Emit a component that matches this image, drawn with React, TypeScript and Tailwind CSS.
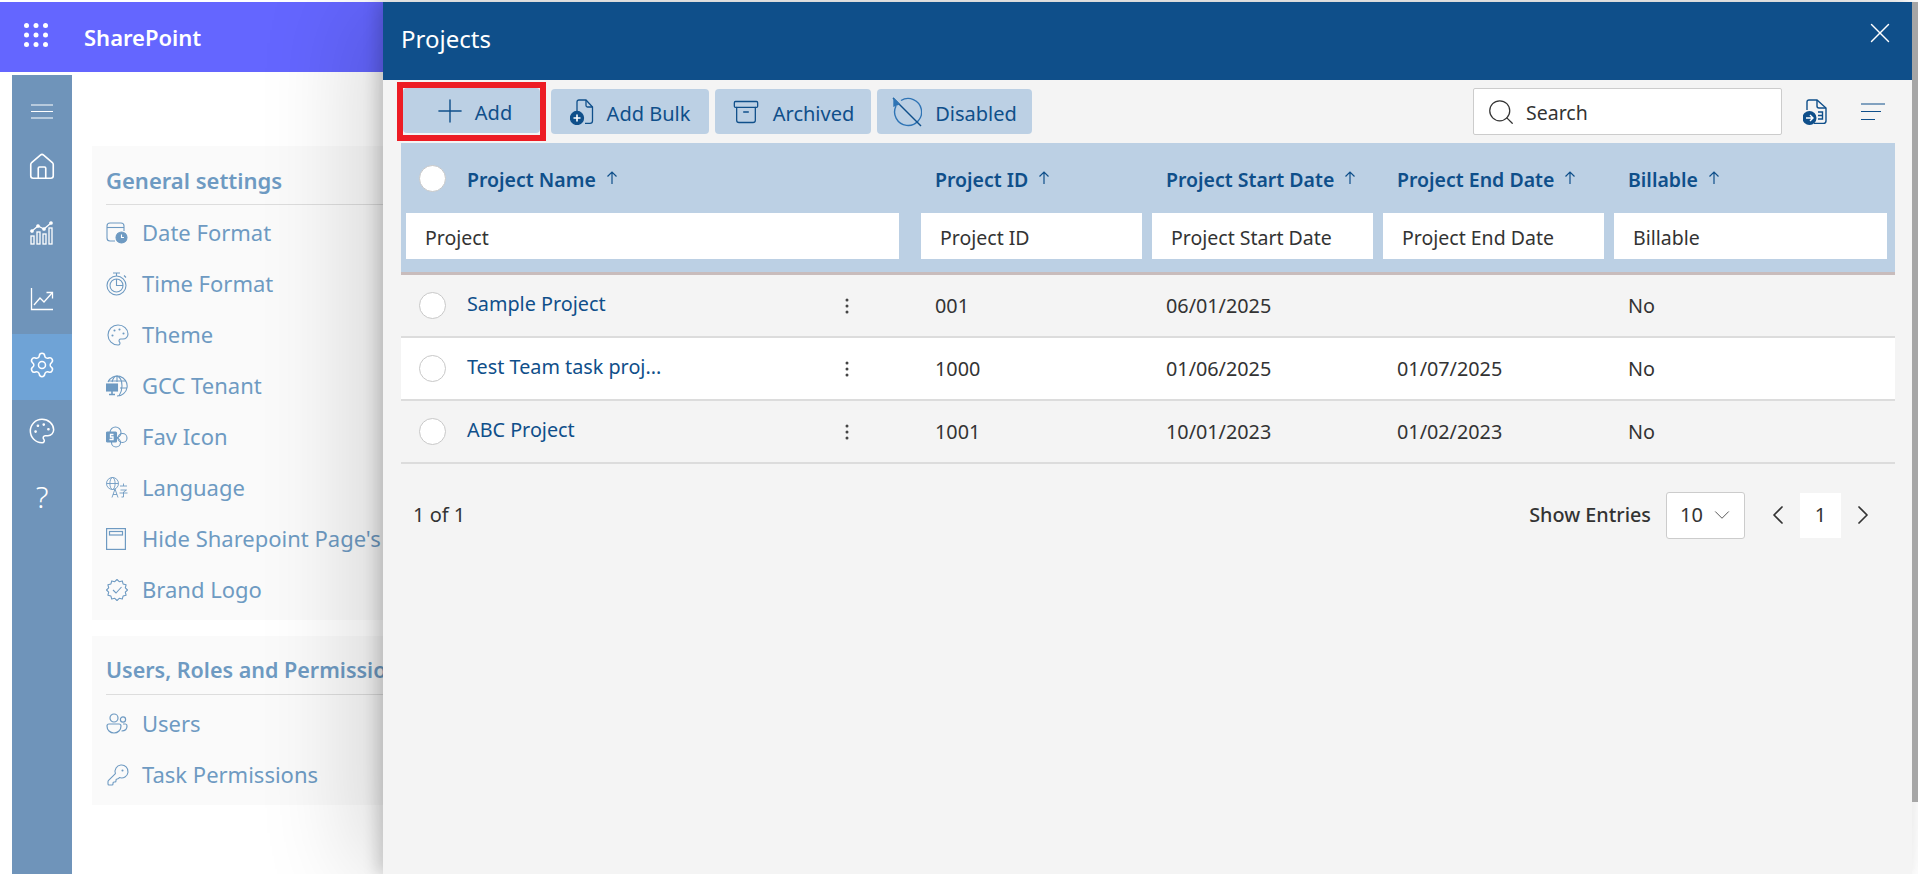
import { useState } from 'react';
import {
	Archive,
	ChevronDown,
	ChevronLeft,
	ChevronRight,
	House,
	KeyRound,
	Palette,
	Plus,
	Search,
	Settings,
	X,
} from 'lucide-react';

const COLS = 'grid grid-cols-[520px_231px_231px_231px_281px]';

type Row = {
	name: string;
	id: string;
	start: string;
	end: string;
	billable: string;
};

const rows: Row[] = [
	{ name: 'Sample Project', id: '001', start: '06/01/2025', end: '', billable: 'No' },
	{ name: 'Test Team task proj...', id: '1000', start: '01/06/2025', end: '01/07/2025', billable: 'No' },
	{ name: 'ABC Project', id: '1001', start: '10/01/2023', end: '01/02/2023', billable: 'No' },
];

function Waffle() {
	return (
		<svg viewBox="0 0 24 24" className="w-6 h-6 fill-white -mt-1">
			{[2.5, 12, 21.5].map((y) =>
				[2.5, 12, 21.5].map((x) => <circle key={x + '-' + y} cx={x} cy={y} r="2.5" />),
			)}
		</svg>
	);
}

function BarsIcon() {
	return (
		<svg viewBox="0 0 24 24" className="w-6 h-6 fill-none stroke-white" strokeWidth="1.3">
			<rect x="1" y="15" width="3" height="8" />
			<rect x="7" y="11" width="3" height="12" />
			<rect x="13" y="13" width="3" height="10" />
			<rect x="19" y="7" width="3" height="16" />
			<path d="M2 10 L8 5 L14 8 L21 2" />
			<circle cx="2" cy="10" r="1.2" className="fill-white" />
			<circle cx="8" cy="5" r="1.2" className="fill-white" />
			<circle cx="14" cy="8" r="1.2" className="fill-white" />
			<circle cx="21" cy="2" r="1.2" className="fill-white" />
		</svg>
	);
}

function TrendIcon() {
	return (
		<svg viewBox="0 0 24 24" className="w-6 h-6 fill-none stroke-white" strokeWidth="1.3">
			<path d="M1.5 1 V22.5 H23" />
			<path d="M4 18 L10 11 L14 15 L22 6" />
			<path d="M16.5 5.5 H22.5 V11.5" />
		</svg>
	);
}

function CalendarIcon() {
	return (
		<svg viewBox="0 0 22 22" className="w-[22px] h-[22px] fill-none stroke-[#6e9ac2]" strokeWidth="1.1">
			<path d="M9 19 H4 C2 19 1 18 1 16 V4 C1 2 2 1 4 1 H15 C17 1 18 2 18 4 V9" />
			<path d="M1 5.5 H18" />
			<circle cx="15.5" cy="15.5" r="5.5" className="fill-[#6e9ac2]" />
			<path d="M15.5 12.5 V15.5 H18" className="stroke-white" />
		</svg>
	);
}

function TimerIcon() {
	return (
		<svg viewBox="0 0 22 24" className="w-[22px] h-[24px] fill-none stroke-[#6e9ac2]" strokeWidth="1.1">
			<path d="M7 1 H14 M10.5 1 V4 M18 3.5 L20 5.5" />
			<circle cx="10.5" cy="13.5" r="9.5" />
			<circle cx="10.5" cy="13.5" r="6.5" />
			<path d="M10.5 7 V13.5 H17" />
		</svg>
	);
}

function GlobeIcon() {
	return (
		<svg viewBox="0 0 22 22" className="w-[22px] h-[22px] fill-none stroke-[#6e9ac2]" strokeWidth="1.1">
			<path d="M2 7 A10 10 0 1 1 11 21" />
			<path d="M6 7 C7 3 9 1 11 1 C14 2 16 6 16 11 C16 15 15 18 13 21" />
			<path d="M2 6 H20 M14 13 H21" />
			<path d="M11 1 V7" />
			<rect x="0.5" y="9" width="11" height="7" className="fill-[#6e9ac2]" />
			<path d="M6 16 V19 M3 19.5 H9" strokeWidth="1.6" />
		</svg>
	);
}

function FavIcon() {
	return (
		<svg viewBox="0 0 22 22" className="w-[22px] h-[22px] fill-none stroke-[#6e9ac2]" strokeWidth="1.1">
			<circle cx="9.5" cy="6.5" r="5.5" />
			<circle cx="16.5" cy="12" r="4.5" />
			<circle cx="10" cy="16.5" r="4.5" />
			<rect x="0.5" y="6" width="10" height="10" rx="1" className="fill-[#6e9ac2]" />
			<path d="M7.5 8.5 H4.5 V11 H7 V13.5 H3.5" className="stroke-white" strokeWidth="1.3" />
		</svg>
	);
}

function LanguageIcon() {
	return (
		<svg viewBox="0 0 22 22" className="w-[22px] h-[22px] fill-none stroke-[#6e9ac2]" strokeWidth="0.9">
			<circle cx="6.5" cy="6.5" r="6" />
			<ellipse cx="6.5" cy="6.5" rx="2.6" ry="6" />
			<path d="M0.5 6.5 H12.5" />
			<path d="M6 20.5 L9 12 L12 20.5 M7 17.5 H11" />
			<path d="M14 9 H21 M17.5 6.5 V9 M14.5 13 H20.5 L17.5 15 V20 L15.5 20 M13.5 16 H21.5" />
		</svg>
	);
}

function PageIcon() {
	return (
		<svg viewBox="0 0 20 22" className="w-[20px] h-[22px] fill-none stroke-[#6e9ac2]" strokeWidth="1.2">
			<rect x="0.6" y="0.6" width="18.8" height="20.8" />
			<rect x="3.5" y="3.5" width="13" height="3.5" />
		</svg>
	);
}

// scalloped seal with a tick, as on the Brand Logo row
function SealIcon() {
	const pts: string[] = [];
	for (let i = 0; i < 24; i++) {
		const r = i % 2 === 0 ? 10.5 : 8.6;
		const a = (i * Math.PI) / 12;
		pts.push(`${(11 + r * Math.cos(a)).toFixed(2)},${(11 + r * Math.sin(a)).toFixed(2)}`);
	}
	return (
		<svg viewBox="0 0 22 22" className="w-[22px] h-[22px] fill-none stroke-[#6e9ac2]" strokeWidth="1.1">
			<polygon points={pts.join(' ')} strokeLinejoin="round" />
			<path d="M7 11 L10 14 L15.5 8" />
		</svg>
	);
}

function UsersIcon() {
	return (
		<svg viewBox="0 0 22 22" className="w-[22px] h-[22px] fill-none stroke-[#6e9ac2]" strokeWidth="1.2">
			<circle cx="8" cy="5" r="4" />
			<circle cx="17" cy="6.5" r="2.6" />
			<path d="M3 11 H13 C14.5 11 15 12 15 13 C15 17 12 20 8 20 C4 20 1 17 1 13 C1 12 1.5 11 3 11 Z" />
			<path d="M17 11 H19.5 C20.5 11 21 12 21 13 C21 16 19 18 15.5 18" />
		</svg>
	);
}

function AddBulkIcon() {
	return (
		<svg viewBox="0 0 24 26" className="w-6 h-[26px] fill-none stroke-[#0f4f8a]" strokeWidth="1.3">
			<path d="M7 12 V3 C7 1.8 7.8 1 9 1 H16 L22.5 8 V22 C22.5 23.5 21.5 24.3 20 24.3 H15" />
			<path d="M16 1 V6.5 C16 7.5 16.7 8 17.5 8 H22.5" />
			<circle cx="7" cy="19" r="6.5" className="fill-[#0f4f8a]" />
			<path d="M7 15.5 V22.5 M3.5 19 H10.5" className="stroke-white" strokeWidth="1.6" />
		</svg>
	);
}

function DisabledIcon() {
	return (
		<svg viewBox="0 0 30 30" className="w-[30px] h-[30px] fill-none stroke-[#2f74b5]" strokeWidth="1.4">
			<path d="M4 9 A13.5 13.5 0 1 0 9 3.5" />
			<path d="M1 1 L29 29" className="stroke-[#0f4f8a]" />
			<path d="M2 2 L2 9 L7 7 Z" className="fill-[#2f74b5]" />
		</svg>
	);
}

function ExportIcon() {
	return (
		<svg viewBox="0 0 24 26" className="w-6 h-[26px] fill-none stroke-[#0f4f8a]" strokeWidth="1.4">
			<path d="M4 11 V3 C4 1.8 4.8 1 6 1 H14 L23 9 V22 C23 23.5 22 24.4 20.5 24.4 H11" />
			<path d="M14 1 V7 C14 8 14.7 9 16 9 H23" />
			<path d="M15 13 H19.5 V20 H15 M15 16.5 H19.5" />
			<circle cx="6.5" cy="19" r="6.3" className="fill-[#0f4f8a]" />
			<path d="M3 19 H10 M7 16 L10 19 L7 22" className="stroke-white" strokeWidth="1.4" />
		</svg>
	);
}

function SortUp() {
	return (
		<svg viewBox="0 0 12 14" className="w-3 h-3.5 fill-none stroke-[#0f4f8a] ml-2.5" strokeWidth="1.2">
			<path d="M6 13 V1 M1.5 5.5 L6 1 L10.5 5.5" />
		</svg>
	);
}

function Circle() {
	return <span className="block w-[27px] h-[27px] rounded-full border border-[#c8c8c8] bg-white" />;
}

function RailIcon({ active, children }: { active?: boolean; children: React.ReactNode }) {
	return (
		<div
			className={`h-[66px] pb-[4px] flex items-center justify-center text-white ${
				active ? 'bg-[#6fa3d6]' : ''
			}`}>
			{children}
		</div>
	);
}

function Item({ icon, label }: { icon: React.ReactNode; label: string }) {
	return (
		<div className="h-[51px] flex items-center whitespace-nowrap">
			<span className="w-9 flex-none flex items-center">{icon}</span>
			<span className="text-[22px] text-[#6e9ac2]">{label}</span>
		</div>
	);
}

function ToolButton({
	icon,
	label,
	width,
}: {
	icon: React.ReactNode;
	label: string;
	width: string;
}) {
	return (
		<button
			className={`h-[45px] bg-[#bcd0e4] rounded-sm flex items-center justify-center gap-[13px] text-[#0f4f8a] text-[20px] ${width}`}>
			{icon}
			<span className="pt-[4px]">{label}</span>
		</button>
	);
}

function FilterInput({ label, cls }: { label: string; cls: string }) {
	return (
		<div className={cls}>
			<div className="h-[46px] bg-white flex items-center pl-[19px] pt-[3px] text-[19.5px] text-[#333]">
				{label}
			</div>
		</div>
	);
}

export default function App() {
	const [page] = useState(1);
	return (
		<div className="relative w-full h-[874px] overflow-hidden bg-white font-['Noto_Sans','Open_Sans',sans-serif]">
			<div className="h-[2px] bg-white" />
			<header className="h-[70px] bg-[#6466ff] flex items-center pl-6 gap-[32px]">
				<Waffle />
				<span className="ml-1 text-white font-semibold text-[22px]">SharePoint</span>
			</header>
			<div className="flex pt-[3px]">
				<nav className="ml-3 w-[60px] h-[799px] bg-[#6f94ba] flex-none">
					<div className="h-[61px] pt-[11px] flex items-center justify-center">
						<svg viewBox="0 0 22 15" className="w-[22px] h-[15px] stroke-white" strokeWidth="1.2">
							<path d="M0 1 H22 M0 7.5 H22 M0 14 H22" />
						</svg>
					</div>
					<RailIcon>
						<House size={30} strokeWidth={1.3} />
					</RailIcon>
					<RailIcon>
						<BarsIcon />
					</RailIcon>
					<RailIcon>
						<TrendIcon />
					</RailIcon>
					<RailIcon active>
						<Settings size={28} strokeWidth={1.3} />
					</RailIcon>
					<RailIcon>
						<Palette size={28} strokeWidth={1.3} />
					</RailIcon>
					<RailIcon>
						<span className="text-[30px] font-light leading-none">?</span>
					</RailIcon>
				</nav>
				<main className="ml-5 w-[320px] flex flex-col gap-4 pt-[71px] overflow-hidden">
					<section className="bg-[#fafafa] pl-[14px] h-[474px]">
						<h2 className="h-[59px] pt-[16px] mb-[2px] border-b border-[#ddd] text-[#6e9ac2] font-semibold text-[22px] leading-[36px]">
							General settings
						</h2>
						<Item icon={<CalendarIcon />} label="Date Format" />
						<Item icon={<TimerIcon />} label="Time Format" />
						<Item icon={<Palette size={24} strokeWidth={1.1} className="text-[#6e9ac2]" />} label="Theme" />
						<Item icon={<GlobeIcon />} label="GCC Tenant" />
						<Item icon={<FavIcon />} label="Fav Icon" />
						<Item icon={<LanguageIcon />} label="Language" />
						<Item icon={<PageIcon />} label="Hide Sharepoint Page's" />
						<Item icon={<SealIcon />} label="Brand Logo" />
					</section>
					<section className="bg-[#fafafa] pl-[14px] h-[169px] overflow-hidden">
						<h2 className="h-[59px] pt-[16px] mb-[3px] border-b border-[#ddd] text-[#6e9ac2] font-semibold text-[21.5px] leading-[36px] whitespace-nowrap">
							Users, Roles and Permissions
						</h2>
						<Item icon={<UsersIcon />} label="Users" />
						<Item icon={<KeyRound size={24} strokeWidth={1.1} className="text-[#6e9ac2]" />} label="Task Permissions" />
					</section>
				</main>
			</div>

			{/* slide-in panel, sits over the settings page */}
			<aside className="absolute top-[2px] left-[383px] w-[1529px] bottom-0 bg-[#f4f4f4] shadow-[-6px_0_14px_rgba(0,0,0,0.16),-30px_0_90px_rgba(0,0,0,0.14)]">
				<div className="h-[78px] bg-[#0f4f8a] flex items-center justify-between pl-[18px] pr-[15px]">
					<span className="text-white text-[24px] -mt-[5px]">Projects</span>
					<X size={34} strokeWidth={1} className="text-white -mt-[16px]" />
				</div>
				<div className="flex items-center h-[63px] pl-[18px] pr-[27px]">
					<div className="flex items-center gap-[6px]">
						<div className="h-[59px] w-[149px] -ml-[4px] mr-[-1px] border-[6px] border-[#ed1c24] flex">
							<ToolButton
								icon={<Plus size={38} strokeWidth={0.9} className="-mr-[7px]" />}
								label="Add"
								width="w-full"
							/>
						</div>
						<ToolButton icon={<AddBulkIcon />} label="Add Bulk" width="w-[158px]" />
						<ToolButton icon={<Archive size={28} strokeWidth={1.1} />} label="Archived" width="w-[156px]" />
						<ToolButton icon={<DisabledIcon />} label="Disabled" width="w-[155px]" />
					</div>
					<div className="ml-auto flex items-center">
						<div className="w-[309px] h-[47px] bg-white border border-[#ccc] rounded-[2px] flex items-center pl-[12px] gap-[10px] text-[19.5px] text-[#333]">
							<Search size={30} strokeWidth={1} />
							<span className="pt-[2px]">Search</span>
						</div>
						<span className="ml-[21px]">
							<ExportIcon />
						</span>
						<svg viewBox="0 0 24 18" className="ml-[34px] w-6 h-[18px] stroke-[#0f4f8a]" strokeWidth="1.2">
							<path d="M0 1 H24 M0 8.5 H20 M0 16.5 H14" />
						</svg>
					</div>
				</div>

				<div className="ml-[18px] mr-[17px]">
					<div className="h-[132px] bg-[#bcd0e4] border-b-[3px] border-[#c8bcbc]">
						<div className={`${COLS} h-[70px] items-center text-[#0f4f8a] font-semibold text-[19.5px]`}>
							<div className="flex items-center pl-[18px]">
								<Circle />
								<span className="ml-[21px] pt-[3px]">Project Name</span>
								<SortUp />
							</div>
							{['Project ID', 'Project Start Date', 'Project End Date', 'Billable'].map((h) => (
								<div key={h} className="flex items-center pl-[14px]">
									<span className="pt-[3px]">{h}</span>
									<SortUp />
								</div>
							))}
						</div>
						<div className={COLS}>
							<FilterInput label="Project" cls="pl-[5px] pr-[22px]" />
							<FilterInput label="Project ID" cls="pr-[10px]" />
							<FilterInput label="Project Start Date" cls="pr-[10px]" />
							<FilterInput label="Project End Date" cls="pr-[10px]" />
							<FilterInput label="Billable" cls="pr-[8px]" />
						</div>
					</div>
					{rows.map((r, i) => (
						<div
							key={r.id}
							className={`${COLS} h-[63px] items-center border-b-2 border-[#dcdcdc] text-[19.8px] text-[#333] ${
								i === 1 ? 'bg-white' : ''
							}`}>
							<div className="flex items-center pl-[18px] pr-[72px]">
								<Circle />
								<span className="ml-[21px] text-[#0f4f8a] -mt-[3px]">{r.name}</span>
								<svg viewBox="0 0 4 16" className="ml-auto w-1 h-4 fill-[#444]">
									<circle cx="2" cy="2" r="1.5" />
									<circle cx="2" cy="8" r="1.5" />
									<circle cx="2" cy="14" r="1.5" />
								</svg>
							</div>
							<div className="pl-[14px]">{r.id}</div>
							<div className="pl-[14px]">{r.start}</div>
							<div className="pl-[14px]">{r.end}</div>
							<div className="pl-[14px]">{r.billable}</div>
						</div>
					))}
					<div className="flex items-center justify-between h-[102px] pl-3 pr-[16px] text-[20px] text-[#333]">
						<span>1 of 1</span>
						<div className="flex items-center">
							<span className="font-medium text-[19.8px]">Show Entries</span>
							<div className="ml-[15px] w-[79px] h-[47px] bg-white border border-[#ccc] rounded-[3px] flex items-center justify-between pl-[13px] pr-[9px]">
								10
								<ChevronDown size={26} strokeWidth={0.9} className="text-[#555]" />
							</div>
							<ChevronLeft size={32} strokeWidth={1.3} className="ml-[17px]" />
							<div className="ml-[6px] w-[41px] h-[45px] bg-white flex items-center justify-center">
								{page}
							</div>
							<ChevronRight size={32} strokeWidth={1.3} className="ml-[6px]" />
						</div>
					</div>
				</div>
			</aside>

			{/* scrollbar thumb */}
			<div className="absolute top-[2px] right-0 w-[6px] h-[800px] bg-[#a6a6a6]" />
		</div>
	);
}
